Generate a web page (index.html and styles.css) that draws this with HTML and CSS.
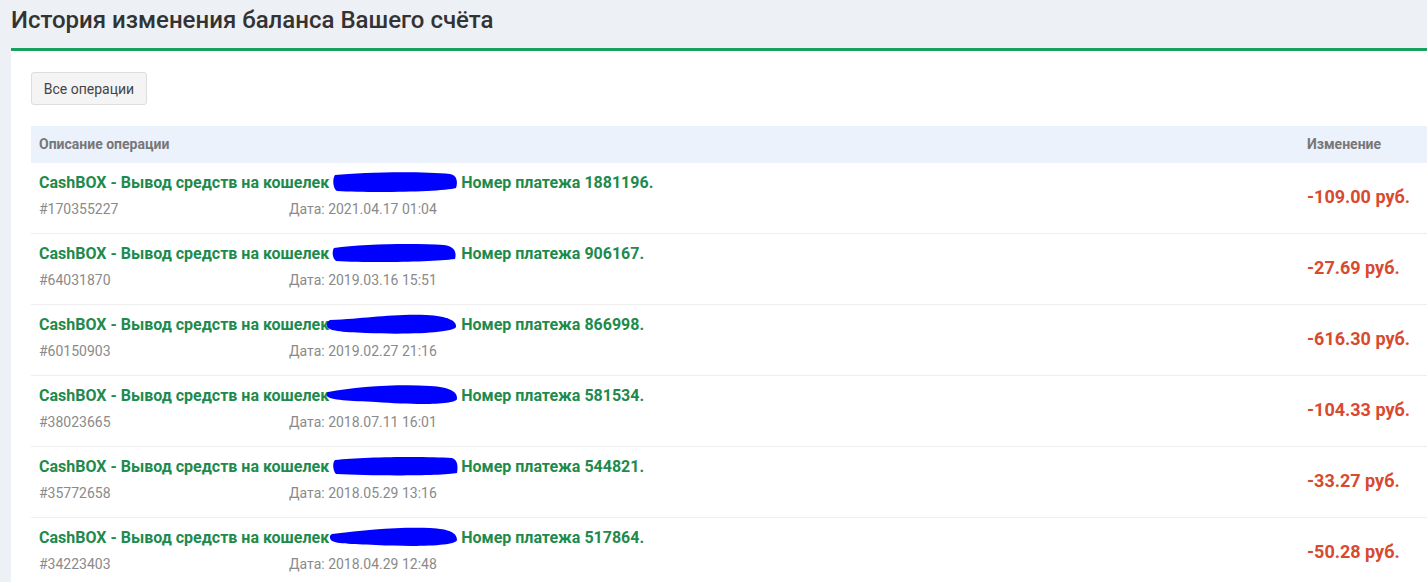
FILE: index.html
```html
<!DOCTYPE html>
<html lang="ru">
<head>
  <meta charset="UTF-8">
  <title>История изменения баланса</title>
  <link rel="stylesheet" href="styles.css">
</head>
<body>
  <h1 class="page-title">История изменения баланса Вашего счёта</h1>
  <div class="panel">
    <button class="btn">Все операции</button>

    <table class="ops">
      <tr>
        <th>Описание операции</th>
        <th class="col-sum">Изменение</th>
      </tr>
      <tr>
        <td>
          <div class="op-title">CashBOX - Вывод средств на кошелек<span class="mask"><svg viewBox="0 0 126 22" preserveAspectRatio="none"><path d="M3 4 C30 1 90 0 118 3 C125 4 126 11 124 17 C110 21 40 22 5 20 C1 18 0 8 3 4 Z"/></svg></span>Номер платежа 1881196.</div>
          <div class="op-meta"><span class="op-id">#170355227</span><span>Дата: 2021.04.17 01:04</span></div>
        </td>
        <td class="sum">-109.00 руб.</td>
      </tr>
      <tr>
        <td>
          <div class="op-title">CashBOX - Вывод средств на кошелек<span class="mask"><svg viewBox="0 0 126 22" preserveAspectRatio="none"><path d="M2 6 C30 2 80 1 112 3 C122 4 125 10 123 17 C100 20 40 21 4 19 C0 16 0 9 2 6 Z"/></svg></span>Номер платежа 906167.</div>
          <div class="op-meta"><span class="op-id">#64031870</span><span>Дата: 2019.03.16 15:51</span></div>
        </td>
        <td class="sum">-27.69 руб.</td>
      </tr>
      <tr>
        <td>
          <div class="op-title">CashBOX - Вывод средств на кошелек<span class="mask over"><svg viewBox="0 0 132 22" preserveAspectRatio="none"><path d="M4 7 C40 6 60 1 100 2 C122 3 131 8 130 14 C128 19 90 22 40 20 C15 19 2 18 1 13 C0 10 2 8 4 7 Z"/></svg></span>Номер платежа 866998.</div>
          <div class="op-meta"><span class="op-id">#60150903</span><span>Дата: 2019.02.27 21:16</span></div>
        </td>
        <td class="sum">-616.30 руб.</td>
      </tr>
      <tr>
        <td>
          <div class="op-title">CashBOX - Вывод средств на кошелек<span class="mask over"><svg viewBox="0 0 132 22" preserveAspectRatio="none"><path d="M2 8 C30 3 70 0 104 2 C124 3 132 8 131 15 C129 21 90 21 50 18 C25 17 3 16 1 12 C0 10 1 9 2 8 Z"/></svg></span>Номер платежа 581534.</div>
          <div class="op-meta"><span class="op-id">#38023665</span><span>Дата: 2018.07.11 16:01</span></div>
        </td>
        <td class="sum">-104.33 руб.</td>
      </tr>
      <tr>
        <td>
          <div class="op-title">CashBOX - Вывод средств на кошелек<span class="mask"><svg viewBox="0 0 126 22" preserveAspectRatio="none"><path d="M3 5 C30 2 90 1 120 3 C126 5 126 12 125 18 C110 21 40 21 4 19 C1 16 0 8 3 5 Z"/></svg></span>Номер платежа 544821.</div>
          <div class="op-meta"><span class="op-id">#35772658</span><span>Дата: 2018.05.29 13:16</span></div>
        </td>
        <td class="sum">-33.27 руб.</td>
      </tr>
      <tr>
        <td>
          <div class="op-title">CashBOX - Вывод средств на кошелек<span class="mask over"><svg viewBox="0 0 132 22" preserveAspectRatio="none"><path d="M6 8 C40 4 70 1 104 2 C124 3 131 7 131 14 C130 20 90 21 50 19 C25 18 8 18 5 14 C3 11 4 9 6 8 Z"/></svg></span>Номер платежа 517864.</div>
          <div class="op-meta"><span class="op-id">#34223403</span><span>Дата: 2018.04.29 12:48</span></div>
        </td>
        <td class="sum">-50.28 руб.</td>
      </tr>
    </table>
  </div>
</body>
</html>
```

FILE: styles.css
```css
* {
  box-sizing: border-box;
}

html {
  overflow: hidden;
}

body {
  margin: 0;
  font-family: Roboto, "Liberation Sans", sans-serif;
  background: #edf0f5;
  color: #333;
}

.page-title {
  margin: 0 0 8px;
  padding: 0 11px;
  font-size: 24px;
  font-weight: 500;
  line-height: 40px;
  color: #333;
}

.panel {
  margin-left: 11px;
  background: #fff;
  border-top: 3px solid #18a05e;
  padding: 21px 0 0 20px;
}

.btn {
  display: block;
  height: 33px;
  width: 116px;
  padding: 0;
  background: #f4f4f4;
  border: 1px solid #ddd;
  border-radius: 3px;
  font-family: inherit;
  font-size: 14px;
  color: #444;
}

.ops {
  width: 100%;
  margin-top: 21px;
  border-collapse: collapse;
  font-size: 14px;
}

.ops th {
  background: #ecf2fc;
  text-align: left;
  padding: 8px 8px 9px;
  line-height: 20px;
  font-size: 14px;
  font-weight: 700;
  color: #777;
}

.ops td {
  border-bottom: 1px solid #eee;
  padding: 10px 8px 14px;
  vertical-align: middle;
}

.col-sum {
  width: 128px;
}

.op-title {
  font-size: 16px;
  font-weight: 700;
  color: #1e8a4c;
  line-height: 20px;
  white-space: nowrap;
}

.mask {
  display: inline-block;
  vertical-align: middle;
  width: 126px;
  height: 22px;
  margin: -4px 3px 0;
}

.mask.over {
  width: 132px;
  margin-left: -3px;
}

.mask svg {
  display: block;
  width: 100%;
  height: 100%;
  fill: #0000ff;
}

.op-meta {
  display: flex;
  margin-top: 6px;
  line-height: 20px;
  color: #8a8a8a;
}

.op-id {
  width: 250px;
}

.sum {
  font-size: 18px;
  font-weight: 700;
  color: #d84a30;
  white-space: nowrap;
}
```
